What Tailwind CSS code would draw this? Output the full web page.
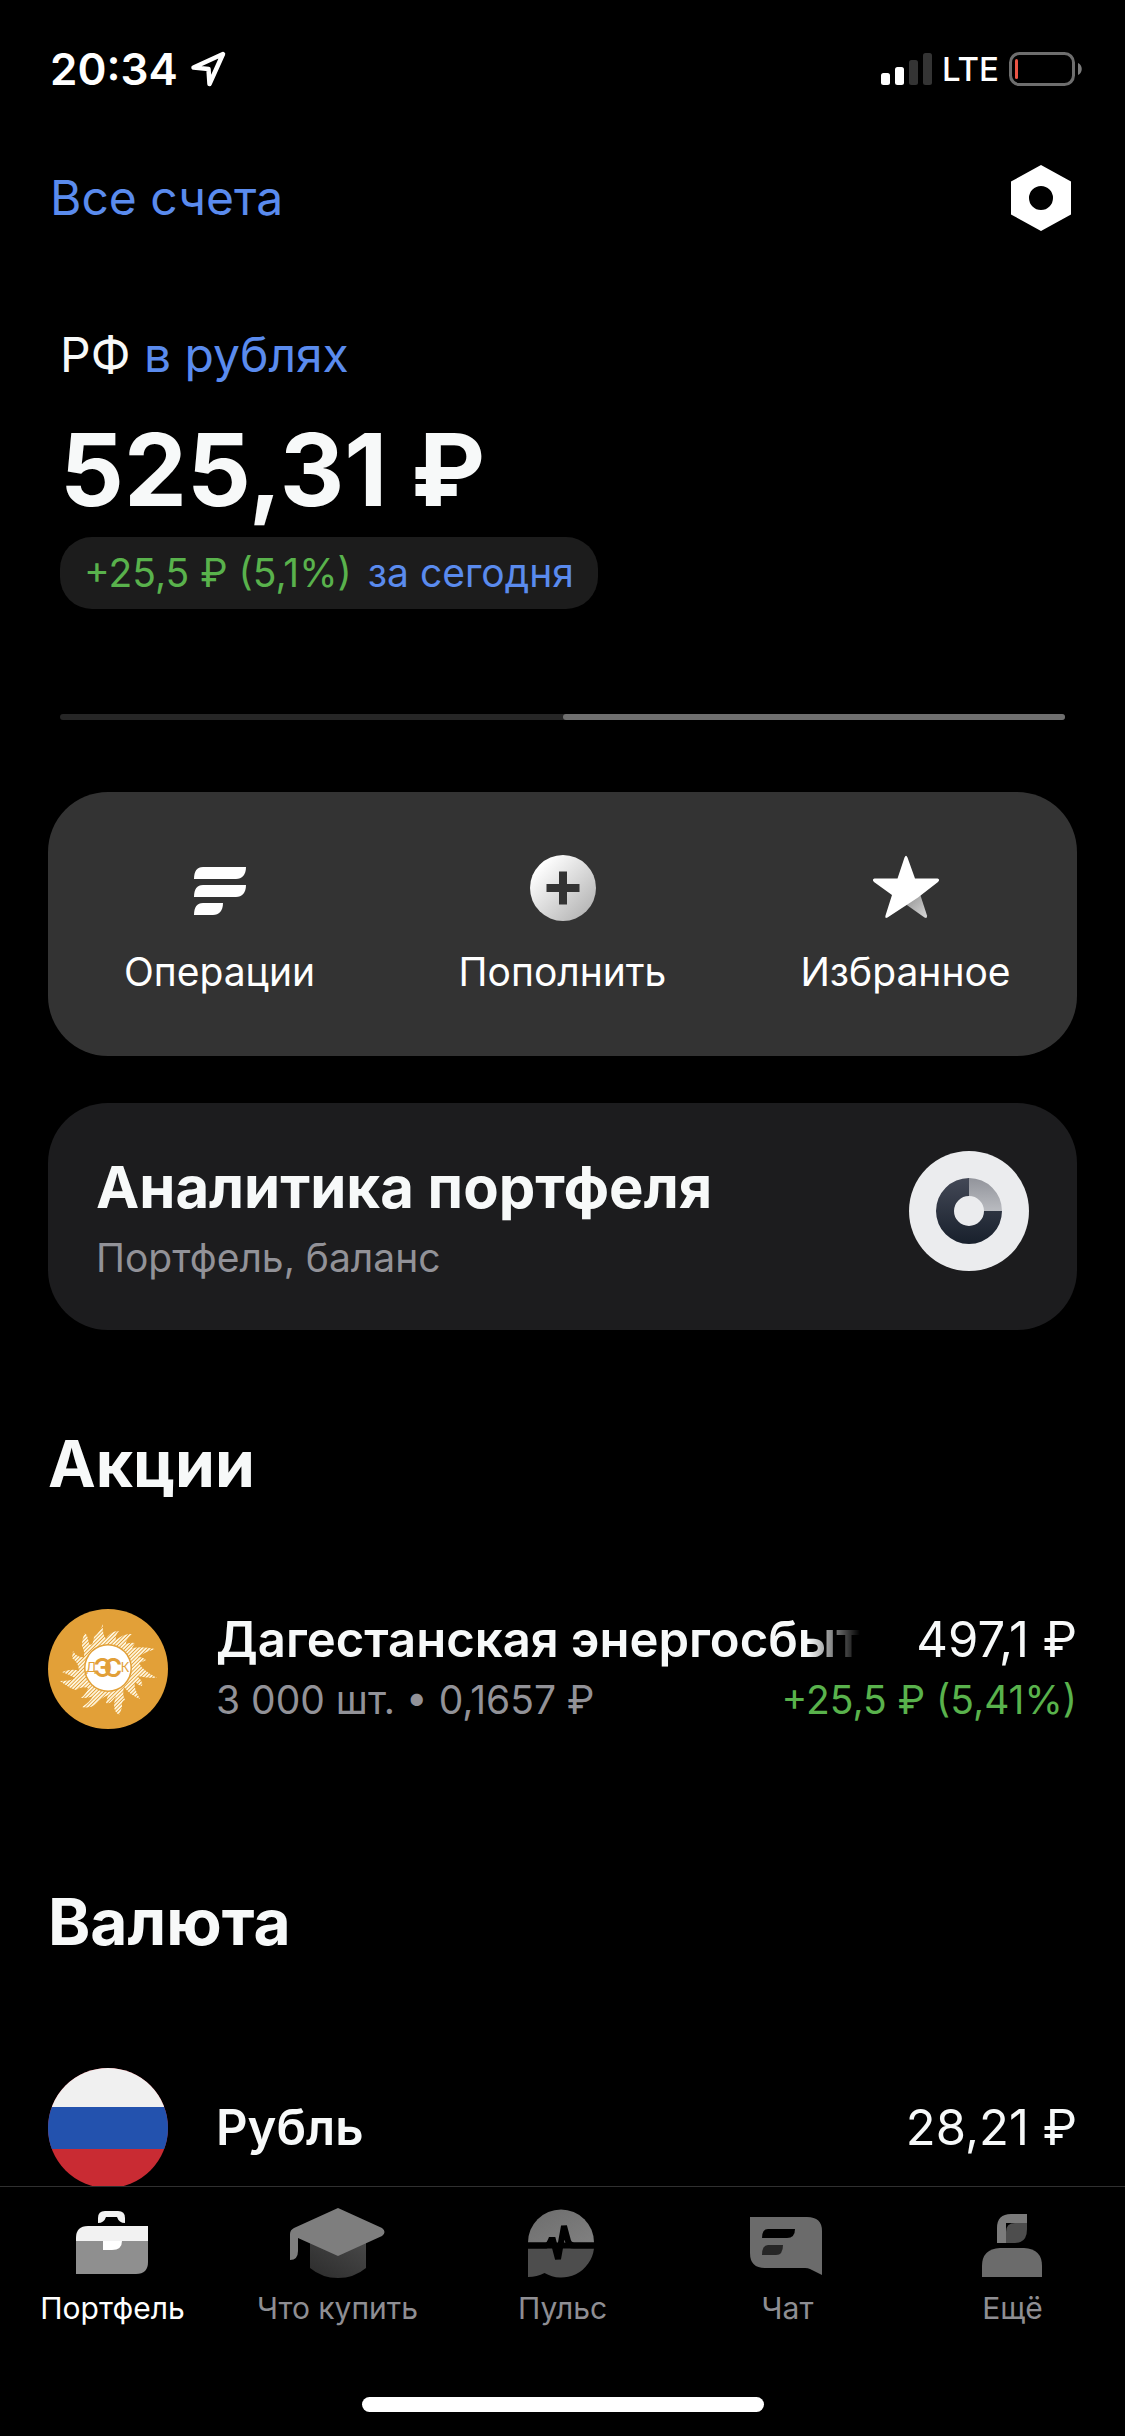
<!DOCTYPE html>
<html lang="ru">
<head>
<meta charset="UTF-8" />
<meta name="viewport" content="width=device-width, initial-scale=1.0" />
<title>Портфель</title>
<script src="https://cdn.jsdelivr.net/npm/@tailwindcss/browser@4"></script>
</head>
<body class="bg-black font-['Inter','Noto_Sans',sans-serif] text-[#f7f9f9]">

<!-- status bar -->
<div class="flex h-12 items-center justify-between mt-[45px] pl-[50px] pr-[43px] text-white">
  <div class="flex items-center gap-3">
    <span class="text-[44px] leading-[48px] font-semibold">20:34</span>
    <svg class="h-9 w-9" viewBox="0 0 36 36" fill="none" stroke="currentColor" stroke-width="4.5" stroke-linejoin="round"><path d="M33 3 3.500 16.500 18.500 18 19.500 33Z" /></svg>
  </div>
  <div class="flex items-center gap-[10px]">
    <svg class="h-8 w-[51px]" viewBox="0 0 51 32">
      <rect x="0" y="20" width="9" height="12" rx="2.500" fill="#fff" />
      <rect x="14" y="14" width="9" height="18" rx="2.500" fill="#fff" />
      <rect x="28" y="7" width="9" height="25" rx="2.500" fill="#343434" />
      <rect x="42" y="0" width="9" height="32" rx="2.500" fill="#343434" />
    </svg>
    <span class="text-[33px] leading-[48px] font-medium">LTE</span>
    <svg class="h-[34px] w-[73px]" viewBox="0 0 73 34">
      <rect x="1.500" y="1.500" width="63" height="31" rx="9" fill="none" stroke="#6e6e6e" stroke-width="3" />
      <rect x="6" y="7" width="3" height="20" rx="1.500" fill="#eb5545" />
      <path d="M69 11c5 2 5 10 0 12z" fill="#7c7c7c" />
    </svg>
  </div>
</div>

<!-- header -->
<header class="mt-[69px] flex items-center justify-between pl-[50px] pr-12">
  <a href="#" class="text-[48px] leading-[60px] text-[#5a8bee]">Все счета</a>
  <button aria-label="Настройки">
    <svg class="size-[72px]" viewBox="0 0 72 72"><path fill="#fff" fill-rule="evenodd" d="M36 3 66 19.500V52.500L36 69 6 52.500V19.500ZM36 24a12 12 0 1 0 0 24 12 12 0 0 0 0-24Z" /></svg>
  </button>
</header>

<main class="px-12 pb-[242px]">
  <section class="mt-[91px] px-3">
    <p class="text-[48px] leading-[60px]">РФ <a href="#" class="text-[#5a8bee]">в рублях</a></p>
    <p class="mt-[35px] text-[100px] leading-[100px] font-bold">525,31 ₽</p>
    <button class="mt-[17px] flex h-[72px] items-center gap-4 rounded-[32px] bg-[#1c1c1c] px-6 text-[39px] leading-[48px]">
      <span class="text-[#59b24c]">+25,5 ₽ (5,1%)</span>
      <span class="text-[#5a8bee]">за сегодня</span>
    </button>
    <div class="mt-[105px] flex h-[6px] rounded-full bg-[#262626]">
      <div class="ml-auto w-1/2 rounded-full bg-[#6f6f6f]"></div>
    </div>
  </section>

  <div class="mt-[72px] grid grid-cols-3 rounded-[60px] bg-[#333333] py-[60px] text-[39px] leading-[48px] text-white">
    <button class="flex flex-col items-center gap-6">
      <svg class="size-[72px]" viewBox="0 0 72 72" fill="#fff"><path d="M19 15h43c0 8-4 12-10 12H10c0-8 3-12 9-12ZM19 33h43c0 8-4 12-10 12H10c0-8 3-12 9-12ZM19 51h20c0 8-4 12-10 12H10c0-8 3-12 9-12Z" /></svg>
      Операции
    </button>
    <button class="flex flex-col items-center gap-6">
      <svg class="size-[72px]" viewBox="0 0 72 72">
        <defs><linearGradient id="plus" x1="0" y1="0" x2="1" y2="1"><stop offset=".15" stop-color="#fff" /><stop offset=".9" stop-color="#b4b4b4" /></linearGradient></defs>
        <circle cx="36" cy="36" r="33" fill="url(#plus)" />
        <path d="M36 19.500v33M19.500 36h33" stroke="#333" stroke-width="8" />
      </svg>
      Пополнить
    </button>
    <button class="flex flex-col items-center gap-6">
      <svg class="size-[72px]" viewBox="0 0 72 72">
        <defs><linearGradient id="star" x1="0" y1="0" x2="1" y2="1"><stop offset="0" stop-color="#8c8c8c" /><stop offset="1" stop-color="#d8d8d8" /></linearGradient></defs>
        <path d="M50 42 57 63.500Q57.500 67 54.500 65.500L34 51Z" fill="url(#star)" />
        <path d="M34.500 5.500q1.500-3.500 3 0L45 26.500H67.500q3 1 .5 3.500L48 45.500 17.500 65.500Q14.500 67 15.500 63.500L22 43 4 30Q1.500 27.500 4.500 26.500H27.500Z" fill="#fff" />
      </svg>
      Избранное
    </button>
  </div>

  <a href="#" class="mt-[47px] flex items-start justify-between rounded-[60px] bg-[#1c1c1e] px-12 py-12">
    <div class="flex flex-col gap-[11px]">
      <h2 class="text-[58px] leading-[72px] font-bold">Аналитика портфеля</h2>
      <p class="text-[39px] leading-[48px] text-[#929298]">Портфель, баланс</p>
    </div>
    <svg class="size-[120px]" viewBox="0 0 120 120">
      <defs>
        <linearGradient id="ring" x1="0" y1="0" x2="0" y2="1"><stop offset="0" stop-color="#434856" /><stop offset="1" stop-color="#18202c" /></linearGradient>
        <linearGradient id="slice" x1="0" y1="0" x2="0" y2="1"><stop offset="0" stop-color="#92949b" /><stop offset="1" stop-color="#b9bbc0" /></linearGradient>
      </defs>
      <circle cx="60" cy="60" r="60" fill="#ebecee" />
      <path d="M60 27A33 33 0 1 0 93 60H75A15 15 0 1 1 60 45Z" fill="url(#ring)" />
      <path d="M60 27A33 33 0 0 1 93 60H75A15 15 0 0 0 60 45Z" fill="url(#slice)" />
    </svg>
  </a>

  <section>
    <h2 class="mt-[98px] text-[64px] leading-[72px] font-bold">Акции</h2>
    <a href="#" class="mt-[109px] flex gap-12">
      <svg class="size-[120px] shrink-0" viewBox="0 0 120 120">
        <defs><pattern id="hatch" width="2.600" height="2.600" patternUnits="userSpaceOnUse" patternTransform="rotate(45)"><rect width="1.700" height="2.600" fill="#fff6dd" /></pattern></defs>
        <circle cx="60" cy="60" r="60" fill="#e2a038" />
        <path fill="url(#hatch)" d="M55 15Q54 25 58 30Q62 22 71 22Q67 26 68 31Q76 24 84 25Q78 30 78 35Q83 33 87 34L84 39Q95 37 107 40Q97 43 90 48Q95 48 98 51Q95 53 91 54Q94 61 109 69Q98 69 89 67Q95 72 94 77Q90 76 87 73Q85 78 92 90Q82 86 76 78Q74 86 77 91Q73 92 74 98Q73 102 71 106Q63 101 68 87Q62 96 58 94L60 86Q53 89 48 95Q42 100 34 98Q42 93 45 87Q41 89 33 89Q39 84 40 79Q33 77 28 81Q21 79 12 72Q24 72 27 69Q22 66 14 63Q24 59 31 62Q31 54 24 49L25 42Q29 49 36 48Q37 43 34 37Q34 29 37 24Q40 27 41 35Q45 38 46 28Q52 23 55 15Z" />
        <circle cx="60" cy="59" r="24" fill="#e2a038" />
        <circle cx="60" cy="59" r="22.500" fill="#fff" />
        <g fill="#e2a038" text-anchor="middle">
          <text x="43" y="63" font-size="13">Д</text>
          <text x="77" y="63" font-size="13">К</text>
          <text x="55" y="68" font-size="25" font-weight="600">Э</text>
          <text x="65" y="68" font-size="25" font-weight="600">С</text>
        </g>
      </svg>
      <div class="flex min-w-0 flex-1 flex-col gap-[6px] pt-px">
        <div class="flex justify-between gap-12 text-[49px] leading-[60px]">
          <p class="min-w-0 flex-1 overflow-hidden font-semibold whitespace-nowrap [mask-image:linear-gradient(to_right,black_calc(100%-60px),transparent_calc(100%-8px))]">Дагестанская энергосбытовая</p>
          <p>497,1 ₽</p>
        </div>
        <div class="flex justify-between text-[39px] leading-[48px]">
          <p class="text-[#929298]">3 000 шт. • 0,1657 ₽</p>
          <p class="text-[#59b24c]">+25,5 ₽ (5,41%)</p>
        </div>
      </div>
    </a>
  </section>

  <section>
    <h2 class="mt-[157px] text-[64px] leading-[72px] font-bold">Валюта</h2>
    <a href="#" class="mt-[110px] flex items-center gap-12 text-[49px] leading-[60px]">
      <div class="flex size-[120px] flex-col overflow-hidden rounded-full bg-[#c92b33]">
        <div class="h-[39px] bg-[#f0f0f0]"></div>
        <div class="h-[42px] bg-[#2352ae]"></div>
      </div>
      <p class="flex-1 font-semibold">Рубль</p>
      <p>28,21 ₽</p>
    </a>
  </section>
</main>

<!-- tab bar -->
<nav class="fixed inset-x-0 bottom-0 border-t border-[#303030] bg-black pt-[21px] pb-6">
  <div class="grid grid-cols-5 text-[30px] leading-9 text-[#8e8e93]">
    <a href="#" class="flex flex-col items-center gap-[10px] text-white">
      <svg class="h-[72px] w-[96px]" viewBox="1 0 96 72">
        <path d="M34 15V10Q34 3 41 3H54Q61 3 61 10V15Q55 15 53 9H42Q40 15 34 15Z" fill="#f2f2f2" />
        <path d="M12 33H84V54Q84 66 72 66H12Z" fill="#8f8f8f" />
        <path d="M24 18H84V33H12V30Q12 18 24 18Z" fill="#f2f2f2" />
        <path d="M39 33H58Q58 42 48 42H39Z" fill="#fff" />
      </svg>
      Портфель
    </a>
    <a href="#" class="flex flex-col items-center gap-[10px]">
      <svg class="h-[72px] w-[96px]" viewBox="0 0 96 72">
        <defs><linearGradient id="cap" x1="0" y1="1" x2="1" y2="0"><stop offset="0" stop-color="#2c2c2c" /><stop offset="1" stop-color="#484848" /></linearGradient></defs>
        <path d="M20 34H76V60Q64 70 48 70T20 60Z" fill="url(#cap)" />
        <path d="M48 0 92 20Q97 24 92 28L48 48 8 30V43Q8 52 0 52V26Q0 22 4 20Z" fill="#7e7e7e" />
      </svg>
      Что купить
    </a>
    <a href="#" class="flex flex-col items-center gap-[10px]">
      <svg class="h-[72px] w-[96px]" viewBox="1 0 96 72">
        <defs><linearGradient id="pulse" x1="0" y1="0" x2="1" y2="1"><stop offset="0" stop-color="#6d6d6d" /><stop offset="1" stop-color="#808080" /></linearGradient></defs>
        <path d="M14 34.500A33 33 0 0 1 80 34.500Z" fill="url(#pulse)" />
        <path d="M14 40.500H80A33 33 0 0 1 30.500 65Q23 69 14 69Z" fill="#4d4d4d" />
        <path d="M14 37.500H32Q35 37 37 32H39L44 51 50 18 54 33Q55 37.500 60 37.500H80" fill="none" stroke="#000" stroke-width="6" />
      </svg>
      Пульс
    </a>
    <a href="#" class="flex flex-col items-center gap-[10px]">
      <svg class="h-[72px] w-[96px]" viewBox="2 0 96 72">
        <path d="M12 9H69Q84 9 84 23V67L72 61Q70 60 67 60H27Q12 60 12 45Z" fill="#6b6b6b" />
        <path d="M30 21H57Q57 30 49 30H24Q24 21 30 21Z" fill="#000" />
        <path d="M30 37H45Q45 47 38 47H24Q24 37 30 37Z" fill="#262626" />
      </svg>
      Чат
    </a>
    <a href="#" class="flex flex-col items-center gap-[10px]">
      <svg class="h-[72px] w-[96px]" viewBox="1 0 96 72">
        <path d="M33 6H63V15H42V35H33V20Q33 6 47 6Z" fill="#7b7b7b" />
        <path d="M51 15H63V21Q63 35 51 35H42V24Q42 15 51 15Z" fill="#4d4d4d" />
        <path d="M36 40H60Q78 41 78 58V69H18V58Q18 41 36 40Z" fill="#6b6b6b" />
      </svg>
      Ещё
    </a>
  </div>
  <div class="mx-auto mt-[71px] h-[15px] w-[402px] rounded-full bg-white"></div>
</nav>

</body>
</html>
